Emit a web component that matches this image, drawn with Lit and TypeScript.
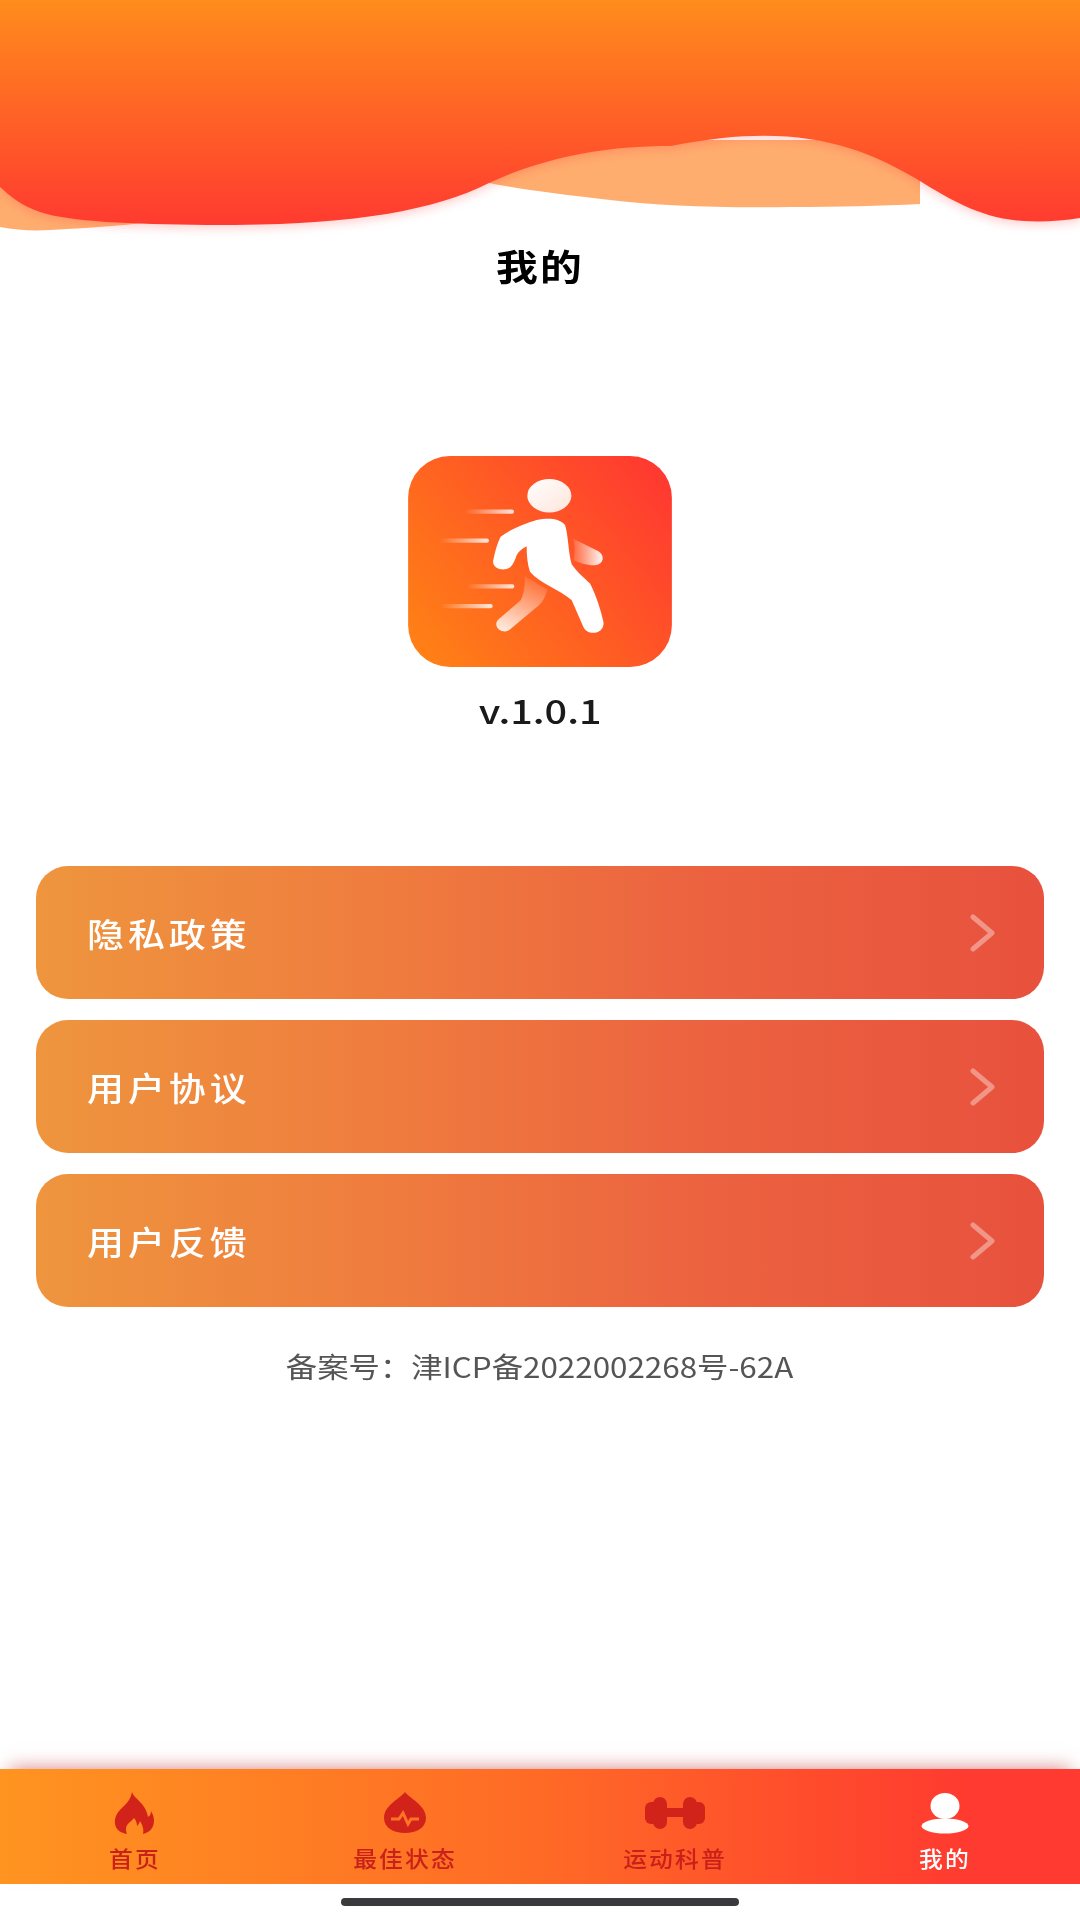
import { LitElement, html, css, svg } from "lit";
import { customElement } from "lit/decorators.js";

const FONT = `"Noto Sans CJK SC", "Noto Sans", sans-serif`;

const tabs = [
  {
    label: "首页",
    active: false,
    icon: svg`<path d="M29 2C31 9 43 13 45 27C47 26 48 24 48 21C51 26 52 31 50 36C48 41 44 43 40 44C41 40 40 36 37 31C36 34 35 35 34 36C34 33 33 30 31 28C29 31 24 33 23 38C23 40 23 42 24 44C18 43 13 40 12 34C11 27 15 21 21 16C25 12 28 8 29 2Z"/>`,
  },
  {
    label: "最佳状态",
    active: false,
    icon: svg`<path d="M32 2C36 8 53 15 53 28C53 38 43 43 32 43C21 43 11 38 11 28C11 15 28 8 32 2Z"/><path d="M18 29H26L30 23L35 34L38 29H46" fill="none" stroke="#ff7426" stroke-width="3"/>`,
  },
  {
    label: "运动科普",
    active: false,
    icon: svg`<rect x="2" y="12" width="14" height="22" rx="6"/><rect x="10" y="7" width="14" height="32" rx="7"/><rect x="20" y="18" width="24" height="9"/><rect x="40" y="7" width="14" height="32" rx="7"/><rect x="48" y="12" width="14" height="22" rx="6"/>`,
  },
  {
    label: "我的",
    active: true,
    icon: svg`<ellipse cx="32" cy="16" rx="14.5" ry="13"/><ellipse cx="32" cy="36" rx="23.5" ry="7.5"/>`,
  },
];

const rows = ["隐私政策", "用户协议", "用户反馈"];

@customElement("app-root")
export class AppRoot extends LitElement {
  static styles = css`
    :host {
      display: flex;
      flex-direction: column;
      width: 1080px;
      height: 1920px;
      background: #fff;
      font-family: ${css([FONT] as unknown as TemplateStringsArray)};
      overflow: hidden;
    }
    .wave {
      display: block;
      width: 1080px;
      height: 240px;
      flex: none;
    }
    .wave-front {
      filter: drop-shadow(0 4px 5px rgba(255, 60, 60, 0.22));
    }
    .title {
      height: 50px;
      line-height: 50px;
      text-align: center;
      font-size: 36px;
      font-weight: 700;
      color: #000;
    }
    .title span,
    .version span,
    .icp span {
      display: inline-block;
    }
    .title span {
      transform: scaleX(1.16);
      letter-spacing: 2px;
    }
    .logo {
      display: block;
      width: 264px;
      height: 211px;
      margin: 166px auto 0;
    }
    .version {
      margin-top: 23px;
      height: 40px;
      line-height: 40px;
      text-align: center;
      font-size: 33px;
      font-weight: 500;
      color: #1a1a1a;
    }
    .version span {
      transform: scaleX(1.2);
    }
    .rows {
      display: flex;
      flex-direction: column;
      gap: 21px;
      margin: 136px 36px 0;
    }
    .row {
      display: flex;
      align-items: center;
      justify-content: space-between;
      height: 133px;
      border-radius: 32px;
      padding: 0 48px 0 51px;
      background: linear-gradient(90deg, #ee953e 0%, #ef7c3e 35%, #ec6340 65%, #e8513d 100%);
    }
    .row-text {
      display: inline-block;
      color: #fff;
      font-size: 33px;
      font-weight: 500;
      letter-spacing: 3.5px;
      transform: scaleX(1.12);
      transform-origin: left center;
    }
    .chev {
      width: 26px;
      height: 38px;
      display: block;
    }
    .icp {
      margin-top: 39px;
      height: 40px;
      line-height: 40px;
      text-align: center;
      font-size: 28px;
      color: #555;
    }
    .icp span {
      transform: scaleX(1.12);
      white-space: nowrap;
    }
    .tabbar {
      margin-top: auto;
      height: 115px;
      display: grid;
      grid-template-columns: repeat(4, 1fr);
      background: linear-gradient(90deg, #ff9420 0%, #ff6a26 50%, #ff3a30 90%, #ff3a30 100%);
      box-shadow: 0 -10px 18px -10px rgba(190, 40, 40, 0.6);
      flex: none;
    }
    .tab {
      display: flex;
      flex-direction: column;
      align-items: center;
      padding-top: 21px;
      color: #c9201a;
      fill: #d2231a;
    }
    .tab.active {
      color: #fff;
      fill: #fff;
    }
    .tab svg {
      display: block;
      width: 64px;
      height: 45px;
    }
    .tab-label {
      display: inline-block;
      margin-top: 8px;
      font-size: 22px;
      line-height: 28px;
      font-weight: 500;
      letter-spacing: 2px;
      white-space: nowrap;
      transform: scaleX(1.08);
    }
    .home {
      flex: none;
      height: 36px;
      display: flex;
      justify-content: center;
      padding-top: 14px;
      box-sizing: border-box;
    }
    .home i {
      display: block;
      width: 398px;
      height: 8px;
      border-radius: 4px;
      background: #3a3a3d;
    }
  `;

  render() {
    return html`
      <svg class="wave" viewBox="0 0 1080 240">
        <defs>
          <linearGradient id="wg" gradientUnits="userSpaceOnUse" x1="0" y1="0" x2="0" y2="226">
            <stop offset="0" stop-color="#ff8c1c" />
            <stop offset="1" stop-color="#ff3a30" />
          </linearGradient>
        </defs>
        <path
          fill="#ffad6f"
          d="M0 190L0 227C16 230 32 231 50 230C85 228 120 226 150 222L489 183C520 189 560 194 610 200C660 206 720 208 790 207C840 207 880 206 920 204L920 140L0 140Z"
        />
        <path
          class="wave-front"
          fill="url(#wg)"
          d="M0 0H1080V218C1062 221 1042 222 1024 221C990 219 958 208 920 184C860 146 790 120 690 146C620 146 0 0 0 0Z"
          style="display:none"
        />
        <path
          class="wave-front"
          fill="url(#wg)"
          d="M0 0H1080V218C1062 221 1042 222 1024 221C985 219 955 203 915 178C855 143 790 122 671 146C610 146 550 155 489 183C430 213 340 226 207 225C130 224 70 222 40 212C20 205 10 196 0 187Z"
        />
      </svg>
      <div class="title"><span>我的</span></div>
      <svg class="logo" viewBox="55 48 790 632">
        <defs>
          <linearGradient id="lg" gradientUnits="userSpaceOnUse" x1="110" y1="640" x2="800" y2="100">
            <stop offset="0" stop-color="#ff7f16" />
            <stop offset="1" stop-color="#ff3a30" />
          </linearGradient>
          <linearGradient id="head" x1="0" y1="0" x2="1" y2="1">
            <stop offset="0" stop-color="#ffffff" />
            <stop offset="1" stop-color="#ffe4da" />
          </linearGradient>
          <linearGradient id="arm" x1="0" y1="0" x2="1" y2="0">
            <stop offset="0" stop-color="#ffffff" stop-opacity="0.1" />
            <stop offset="1" stop-color="#ffffff" stop-opacity="0.95" />
          </linearGradient>
          <linearGradient id="leg" x1="0.6" y1="0" x2="0.2" y2="1">
            <stop offset="0" stop-color="#ffffff" stop-opacity="0.1" />
            <stop offset="1" stop-color="#ffffff" stop-opacity="0.85" />
          </linearGradient>
          <linearGradient id="ln" x1="0" y1="0" x2="1" y2="0">
            <stop offset="0" stop-color="#ffffff" stop-opacity="0" />
            <stop offset="1" stop-color="#ffffff" stop-opacity="0.85" />
          </linearGradient>
        </defs>
        <rect x="55" y="48" width="790" height="632" rx="125" fill="url(#lg)" />
        <ellipse cx="478" cy="167" rx="66" ry="50" fill="url(#head)" />
        <path
          fill="url(#arm)"
          d="M548 295L625 333C645 345 642 372 615 375C590 376 570 368 550 360C555 340 555 315 548 295Z"
        />
        <path
          fill="url(#leg)"
          d="M405 408L472 448C465 475 455 490 435 505L360 568C340 585 305 560 325 538L392 480C403 460 405 430 405 408Z"
        />
        <path
          fill="#fff"
          d="M440 240C475 232 510 235 525 255C535 285 535 340 545 372C560 395 585 415 600 430C620 470 632 510 640 545C645 580 595 590 580 560L545 480C510 450 450 430 420 395C412 370 410 345 410 318C395 325 385 335 380 345C375 360 370 372 360 382C340 395 305 385 310 360C315 335 322 310 332 290C360 268 405 250 440 240Z"
        />
        <rect x="225" y="208" width="147" height="13" rx="6" fill="url(#ln)" />
        <rect x="150" y="295" width="147" height="13" rx="6" fill="url(#ln)" />
        <rect x="230" y="432" width="143" height="13" rx="6" fill="url(#ln)" />
        <rect x="152" y="491" width="156" height="13" rx="6" fill="url(#ln)" />
      </svg>
      <div class="version"><span>v.1.0.1</span></div>
      <div class="rows">
        ${rows.map(
          (r) => html`<div class="row">
            <span class="row-text">${r}</span>
            <svg class="chev" viewBox="0 0 26 38">
              <path
                d="M3 3L22 19L3 35"
                fill="none"
                stroke="rgba(255,255,255,0.38)"
                stroke-width="5"
                stroke-linecap="round"
                stroke-linejoin="round"
              />
            </svg>
          </div>`
        )}
      </div>
      <div class="icp"><span>备案号：津ICP备2022002268号-62A</span></div>
      <div class="tabbar">
        ${tabs.map(
          (t) => html`<div class="tab ${t.active ? "active" : ""}">
            <svg viewBox="0 0 64 45">${t.icon}</svg>
            <span class="tab-label">${t.label}</span>
          </div>`
        )}
      </div>
      <div class="home"><i></i></div>
    `;
  }
}
